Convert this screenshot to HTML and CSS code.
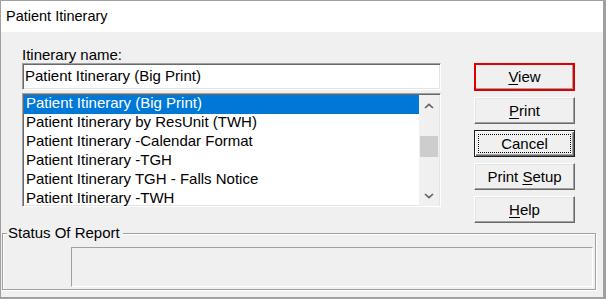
FILE: index.html
```html
<!DOCTYPE html>
<html>
<head>
<meta charset="utf-8">
<link rel="stylesheet" href="styles.css">
</head>
<body>
<div class="window">
  <div class="titlebar">Patient Itinerary</div>
  <div class="client">
    <div class="top">
      <div class="left">
        <div class="label">Itinerary name:</div>
        <div class="input">Patient Itinerary (Big Print)</div>
        <div class="listbox">
          <ul class="items">
            <li class="item selected">Patient Itinerary (Big Print)</li>
            <li class="item">Patient Itinerary by ResUnit (TWH)</li>
            <li class="item">Patient Itinerary -Calendar Format</li>
            <li class="item">Patient Itinerary -TGH</li>
            <li class="item">Patient Itinerary TGH - Falls Notice</li>
            <li class="item">Patient Itinerary -TWH</li>
          </ul>
          <div class="scrollbar">
            <div class="arrow"><svg width="10" height="6" viewBox="0 0 10 6"><polyline points="1,5 5,1.3 9,5" fill="none" stroke="#606060" stroke-width="1.6"/></svg></div>
            <div class="thumb"></div>
            <div class="arrow arrow-down"><svg width="10" height="6" viewBox="0 0 10 6"><polyline points="1,1 5,4.7 9,1" fill="none" stroke="#606060" stroke-width="1.6"/></svg></div>
          </div>
        </div>
      </div>
      <div class="buttons">
        <div class="btn btn-view"><u>V</u>iew</div>
        <div class="btn"><u>P</u>rint</div>
        <div class="btn btn-default">Cancel</div>
        <div class="btn">Print <u>S</u>etup</div>
        <div class="btn"><u>H</u>elp</div>
      </div>
    </div>
    <fieldset class="group">
      <legend class="group-title">Status Of Report</legend>
      <div class="status"></div>
    </fieldset>
  </div>
</div>
</body>
</html>
```
FILE: styles.css
```css
* { box-sizing: border-box; }
html, body { margin: 0; padding: 0; background: #ffffff; }
body {
  font-family: "Liberation Sans", Arial, sans-serif;
  font-size: 15px;
  color: #000;
}
.window {
  width: 606px;
  height: 299px;
  border-style: solid;
  border-color: #a0a0a0;
  border-width: 1px 3px 2px 1px;
  background: #f0f0f0;
  display: flex;
  flex-direction: column;
}
.titlebar {
  flex: none;
  height: 31px;
  line-height: 31px;
  background: #fff;
  padding-left: 5px;
  font-size: 14.5px;
}
.client {
  flex: 1;
  display: flex;
  flex-direction: column;
  padding-top: 14px;
}
.top {
  display: flex;
  gap: 33px;
  padding-left: 21px;
}
.left {
  width: 419px;
  display: flex;
  flex-direction: column;
}
.label {
  height: 17px;
  line-height: 17px;
}
.input {
  height: 27px;
  line-height: 23px;
  background: #fff;
  border: 1px solid;
  border-color: #a0a0a0 #fff #fff #a0a0a0;
  box-shadow: inset 1px 1px 0 #696969, inset -1px -1px 0 #e3e3e3;
  padding-left: 2px;
  white-space: nowrap;
}
.listbox {
  margin-top: 3px;
  height: 114px;
  background: #fff;
  border: 1px solid;
  border-color: #a0a0a0 #fff #fff #a0a0a0;
  box-shadow: inset 1px 1px 0 #696969, inset -1px -1px 0 #e3e3e3;
  padding: 1px 1px 0 1px;
  display: flex;
  overflow: hidden;
}
.items {
  list-style: none;
  margin: 0;
  padding: 0;
  flex: 1;
  min-width: 0;
  overflow: hidden;
}
.item {
  height: 19px;
  line-height: 16px;
  padding-left: 2px;
  white-space: nowrap;
}
.item.selected {
  background: #0078d7;
  color: #fff;
}
.scrollbar {
  width: 20px;
  flex: none;
  background: #f0f0f0;
  display: flex;
  flex-direction: column;
}
.arrow {
  height: 21px;
  display: flex;
  align-items: center;
  justify-content: center;
}
.arrow-down { margin-top: auto; }
.thumb {
  margin: 20px 1px 0;
  height: 21px;
  background: #cdcdcd;
}
.buttons {
  width: 101px;
  margin-top: 17px;
  display: flex;
  flex-direction: column;
  gap: 6px;
}
.btn {
  height: 27px;
  line-height: 25px;
  text-align: center;
  background: #f0f0f0;
  border: 1px solid;
  border-color: #fff #696969 #696969 #fff;
  box-shadow: inset -1px -1px 0 #a0a0a0, inset 1px 1px 0 #e3e3e3;
  white-space: nowrap;
}
.btn u { text-underline-offset: 2px; }
.btn-view {
  height: 28px;
  line-height: 24px;
  border: 2px solid #e00000;
  box-shadow: inset -1px -1px 0 #a0a0a0;
}
.btn-default {
  border: 1px solid #1e1e1e;
  box-shadow: inset 1px 1px 0 #fff, inset -1px -1px 0 #696969, inset -2px -2px 0 #a0a0a0;
  outline: 1px dotted #000;
  outline-offset: -5px;
}
.group {
  margin: 1px 0 0 1px;
  width: 594px;
  min-width: 0;
  border: 1px solid #a0a0a0;
  box-shadow: inset 1px 1px 0 #fff, 1px 1px 0 #fff;
  padding: 5px 2px 2px 4px;
}
.group-title {
  padding: 0 3px 0 1px;
  line-height: 18px;
  background: #f0f0f0;
}
.status {
  margin-left: 64px;
  width: 522px;
  height: 40px;
  border: 1px solid;
  border-color: #a0a0a0 #fff #fff #a0a0a0;
}
```
